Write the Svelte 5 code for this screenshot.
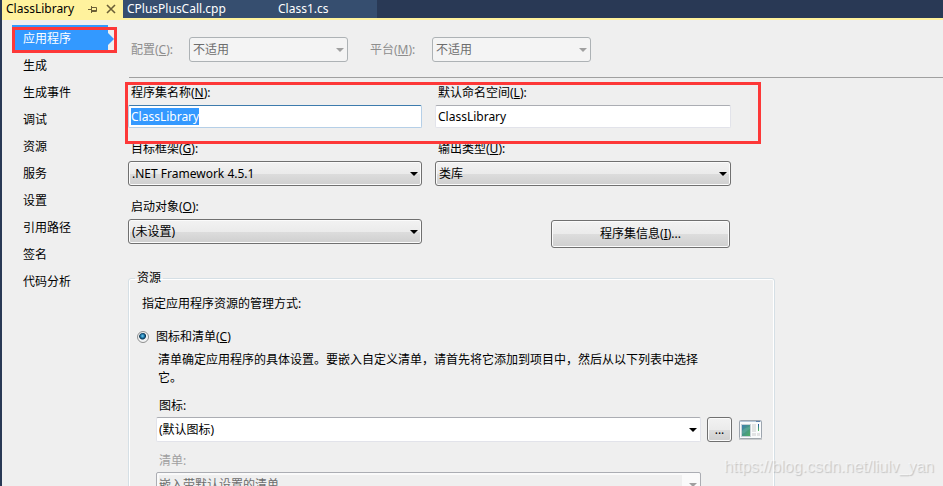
<script>
  import { onMount } from "svelte";

  const pages = ["应用程序", "生成", "生成事件", "调试", "资源", "服务", "设置", "引用路径", "签名", "代码分析"];
  let current = $state("应用程序");
  let assemblyName = $state("ClassLibrary");
  let rootNamespace = $state("ClassLibrary");
  let mode = $state("icon");
  let nameInput;

  onMount(() => {
    nameInput.focus();
    nameInput.select();
  });
</script>

{#snippet combo(id, value, kind, disabled)}
  <span class="combo {kind}" class:disabled>
    <select {id} {disabled}>
      <option>{value}</option>
    </select>
  </span>
{/snippet}

<div class="window" lang="zh-CN">
  <header class="tabs">
    <div class="tab active">
      <span>ClassLibrary</span>
      <button class="icon" aria-label="pin">
        <svg width="9" height="9" viewBox="0 0 9 9" fill="none" stroke="#6b5f37">
          <path d="M0 4.5h3M3.5 1v7M3.5 2.5h5v4h-5M3.5 5.5h5" />
        </svg>
      </button>
      <button class="icon" aria-label="close">
        <svg width="10" height="10" viewBox="0 0 10 10" fill="none" stroke="#6b5f37" stroke-width="1.6">
          <path d="M1 1l8 8M9 1l-8 8" />
        </svg>
      </button>
    </div>
    <div class="tab cpp">CPlusPlusCall.cpp</div>
    <div class="tab cs">Class1.cs</div>
  </header>

  <div class="body">
    <nav>
      {#each pages as page}
        <button class="page" class:selected={page === current} onclick={() => (current = page)}>
          {page}
        </button>
      {/each}
    </nav>

    <main>
      <div class="config">
        <label for="config">配置(<u>C</u>):</label>
        {@render combo("config", "不适用", "small", true)}
        <label for="platform">平台(<u>M</u>):</label>
        {@render combo("platform", "不适用", "small", true)}
      </div>
      <hr />

      <div class="content">
        <div class="row marked">
          <div class="field">
            <label for="name">程序集名称(<u>N</u>):</label>
            <input id="name" type="text" spellcheck="false" bind:this={nameInput} bind:value={assemblyName} />
          </div>
          <div class="field">
            <label for="namespace">默认命名空间(<u>L</u>):</label>
            <input id="namespace" type="text" spellcheck="false" bind:value={rootNamespace} />
          </div>
        </div>
        <div class="row">
          <div class="field">
            <label for="framework">目标框架(<u>G</u>):</label>
            {@render combo("framework", ".NET Framework 4.5.1", "shaded", false)}
          </div>
          <div class="field">
            <label for="output">输出类型(<u>U</u>):</label>
            {@render combo("output", "类库", "shaded", false)}
          </div>
        </div>
        <div class="row">
          <div class="field">
            <label for="startup">启动对象(<u>O</u>):</label>
            {@render combo("startup", "(未设置)", "shaded", false)}
          </div>
          <button class="push info">程序集信息(<u>I</u>)...</button>
        </div>

        <fieldset>
          <legend>资源</legend>
          <p class="intro">指定应用程序资源的管理方式:</p>
          <label class="radio">
            <input type="radio" name="mode" value="icon" bind:group={mode} />
            <span>图标和清单(<u>C</u>)</span>
          </label>
          <div class="options">
            <p>清单确定应用程序的具体设置。要嵌入自定义清单，请首先将它添加到项目中，然后从以下列表中选择它。</p>
            <label for="icon">图标:</label>
            <div class="picker">
              {@render combo("icon", "(默认图标)", "plain", false)}
              <button class="push browse">...</button>
              <svg class="preview" width="23" height="20" viewBox="0 0 23 20">
                <defs>
                  <linearGradient id="picture" x1="0" y1="0" x2="1" y2="1">
                    <stop offset="0" stop-color="#3f7fae" />
                    <stop offset="1" stop-color="#4fae62" />
                  </linearGradient>
                  <linearGradient id="bar" x1="0" y1="0" x2="0" y2="1">
                    <stop offset="0" stop-color="#2450a8" />
                    <stop offset="1" stop-color="#58c35a" />
                  </linearGradient>
                </defs>
                <rect x="0.5" y="0.5" width="22" height="18" rx="1" fill="#fafbfc" stroke="#9da5ae" />
                <path d="M1 1.5h21" stroke="#b5c6d8" />
                <path d="M17 1.5h4" stroke="#5f83ad" />
                <path d="M0 19h23" stroke="#a5a9ad" />
                <rect x="2" y="4" width="10" height="13" fill="#c8d2d8" />
                <rect x="3" y="5" width="8" height="11" fill="url(#picture)" />
                <path d="M3 11c3-4 6-3 8-5v3c-3 1-4 4-8 5z" fill="#62ad9b" opacity=".6" />
                <path d="M13 4h4v8h-4zM13 13h4v3h-4zM18 13h3v3h-3z" fill="#e2e3e4" />
                <rect x="19" y="4" width="1" height="7" fill="url(#bar)" />
              </svg>
            </div>
            <label class="dim" for="manifest">清单:</label>
            {@render combo("manifest", "嵌入带默认设置的清单", "plain", true)}
          </div>
        </fieldset>
      </div>
    </main>
  </div>
  <div class="watermark">https://blog.csdn.net/liulv_yan</div>
</div>

<style>
  :global(body) {
    margin: 0;
    background: #293955;
  }

  .window,
  button,
  input,
  select {
    font-family: "Noto Sans", "Noto Sans CJK SC", sans-serif;
    font-size: 12px;
    line-height: 18px;
    color: #000;
  }

  .window {
    position: relative;
    display: flex;
    flex-direction: column;
    height: 100vh;
    box-sizing: border-box;
    padding-left: 2px;
    overflow: hidden;
  }

  .tabs {
    display: flex;
    flex: none;
    height: 18px;
    border-bottom: 2px solid #fff29d;
  }

  .tab {
    box-sizing: border-box;
    padding: 0 4px;
    background: #364e6f;
    color: #fff;
  }

  .tab.active {
    display: flex;
    align-items: center;
    width: 121px;
    padding-right: 7px;
    background: #fff29d;
    color: #000;
  }

  .tab.active span {
    flex: 1;
  }

  .icon {
    display: flex;
    padding: 0;
    border: 0;
    margin-left: 9px;
    background: none;
  }

  .tab.cpp {
    width: 151px;
  }

  .tab.cs {
    width: 103px;
  }

  .body {
    display: flex;
    flex: 1;
    min-height: 0;
    background: #efefef;
  }

  nav {
    position: relative;
    flex: none;
    width: 96px;
    padding: 5px 20px 0 10px;
  }

  nav::after,
  .marked::after {
    content: "";
    position: absolute;
    border: 3px solid #fd3838;
    pointer-events: none;
  }

  nav::after {
    inset: 7px 11px auto 10px;
    height: 20px;
  }

  .page {
    position: relative;
    display: block;
    width: 100%;
    height: 27px;
    padding: 0 11px;
    border: 0;
    background: none;
    text-align: left;
  }

  .page.selected {
    background: #3399ff;
    color: #fff;
  }

  .page.selected::after {
    content: "";
    position: absolute;
    left: 100%;
    top: 8px;
    border: 6px solid transparent;
    border-left-color: #3399ff;
    border-right: 0;
  }

  main {
    flex: 1;
    min-width: 0;
  }

  .config {
    display: flex;
    align-items: center;
    padding: 17px 0 15px 3px;
    color: #8d8d8d;
  }

  .config label {
    width: 58px;
  }

  .config .combo {
    width: 159px;
    margin-right: 22px;
  }

  .config label + .combo:last-child {
    margin-left: 4px;
  }

  hr {
    height: 1px;
    border: 0;
    margin: 0 0 6px 1px;
    background: #a0a0a0;
  }

  .content {
    max-width: 647px;
  }

  .row {
    position: relative;
    display: grid;
    grid-template-columns: minmax(0, 294px) minmax(0, 296px);
    column-gap: 13px;
    margin-bottom: 12px;
  }

  .marked::after {
    inset: -2px 14px -16px -3px;
    z-index: 1;
  }

  .field,
  .options {
    display: flex;
    flex-direction: column;
  }

  .field label {
    padding: 0 3px 3px;
  }

  input[type="text"] {
    box-sizing: border-box;
    width: 100%;
    height: 23px;
    padding: 0 2px;
    border: 1px solid #e2e3ea;
    border-top-color: #abadb3;
    border-radius: 2px;
    background: #fff;
    outline: none;
  }

  input[type="text"]:focus {
    border-color: #b5cfe7;
    border-top-color: #3d7bad;
  }

  input::selection {
    background: rgba(51, 153, 255, 0.996);
    color: #fff;
  }

  .combo {
    position: relative;
    display: block;
  }

  .combo::after {
    content: "";
    position: absolute;
    right: 4px;
    top: 11px;
    border: 4px solid transparent;
    border-top-color: #000;
    border-bottom: 0;
    pointer-events: none;
  }

  .combo.disabled::after {
    border-top-color: #a0a0a0;
  }

  select {
    appearance: none;
    display: block;
    box-sizing: border-box;
    width: 100%;
    height: 25px;
    padding: 0 3px;
    border: 1px solid #707070;
    border-radius: 3px;
    outline: none;
    opacity: 1;
  }

  .small select {
    border-color: #adb2b5;
    background: #f4f4f4;
    color: #6d6d6d;
  }

  .shaded select,
  .push {
    background: linear-gradient(#f2f2f2, #ebebeb 50%, #dddddd 50%, #cfcfcf);
    box-shadow: inset 0 0 0 1px #fbfbfb;
  }

  .plain select {
    padding: 0 2px;
    border-color: #abadb3 #e2e3ea #e2e3ea;
    border-radius: 2px;
    background: #fff;
  }

  .plain.disabled select {
    border-color: #abadb3;
    background: linear-gradient(#efefef, #efefef) 2px 2px / calc(100% - 20px) 100% no-repeat #fafafa;
    color: #6d6d6d;
  }

  .push {
    box-sizing: border-box;
    padding: 0;
    border: 1px solid #707070;
    border-radius: 3px;
  }

  .info {
    justify-self: end;
    width: 179px;
    height: 28px;
    margin: 22px 1px 0 0;
  }

  fieldset {
    min-width: 0;
    padding: 0 12px 0 6px;
    border: 1px solid #d5dfe5;
    border-radius: 3px;
    margin: 21px 0 0;
    box-shadow: inset 1px 0 #fff, inset -1px 0 #fff, inset 0 1px #fff;
  }

  legend {
    padding: 0 2px;
  }

  p {
    margin: 0;
  }

  .intro {
    padding: 8px 7px 15px;
  }

  .radio {
    display: flex;
    align-items: center;
    gap: 7px;
    padding-left: 2px;
  }

  .radio input {
    appearance: none;
    width: 12px;
    height: 12px;
    border: 1px solid #8e8f8f;
    border-radius: 50%;
    margin: 0;
    background: #f6f6f6;
    box-shadow: inset 0 0 0 1px #f4f4f4;
  }

  .radio input:checked {
    background: radial-gradient(circle at 45% 40%, #6fd0f5 0, #1a6ea0 2px, #0b3550 3px, #f0f3f5 4px);
  }

  .options {
    padding: 5px 0 0 21px;
  }

  .options p {
    width: 545px;
    box-sizing: border-box;
    padding: 0 0 10px 2px;
  }

  .options label {
    padding: 0 3px 2px;
  }

  .options .dim {
    padding-top: 10px;
    color: #a0a0a0;
  }

  .options .combo {
    flex: none;
    width: 545px;
  }

  .picker {
    display: flex;
    align-items: center;
  }

  .browse {
    flex: none;
    width: 25px;
    height: 25px;
    margin: 0 7px 0 6px;
  }

  .preview {
    flex: none;
  }

  .watermark {
    position: absolute;
    right: 9px;
    bottom: 10px;
    font-family: "Liberation Sans", Arial, sans-serif;
    font-size: 16px;
    color: rgba(255, 255, 255, 0.5);
    text-shadow: 1px 1px 1px rgba(0, 0, 0, 0.18);
    pointer-events: none;
  }
</style>
